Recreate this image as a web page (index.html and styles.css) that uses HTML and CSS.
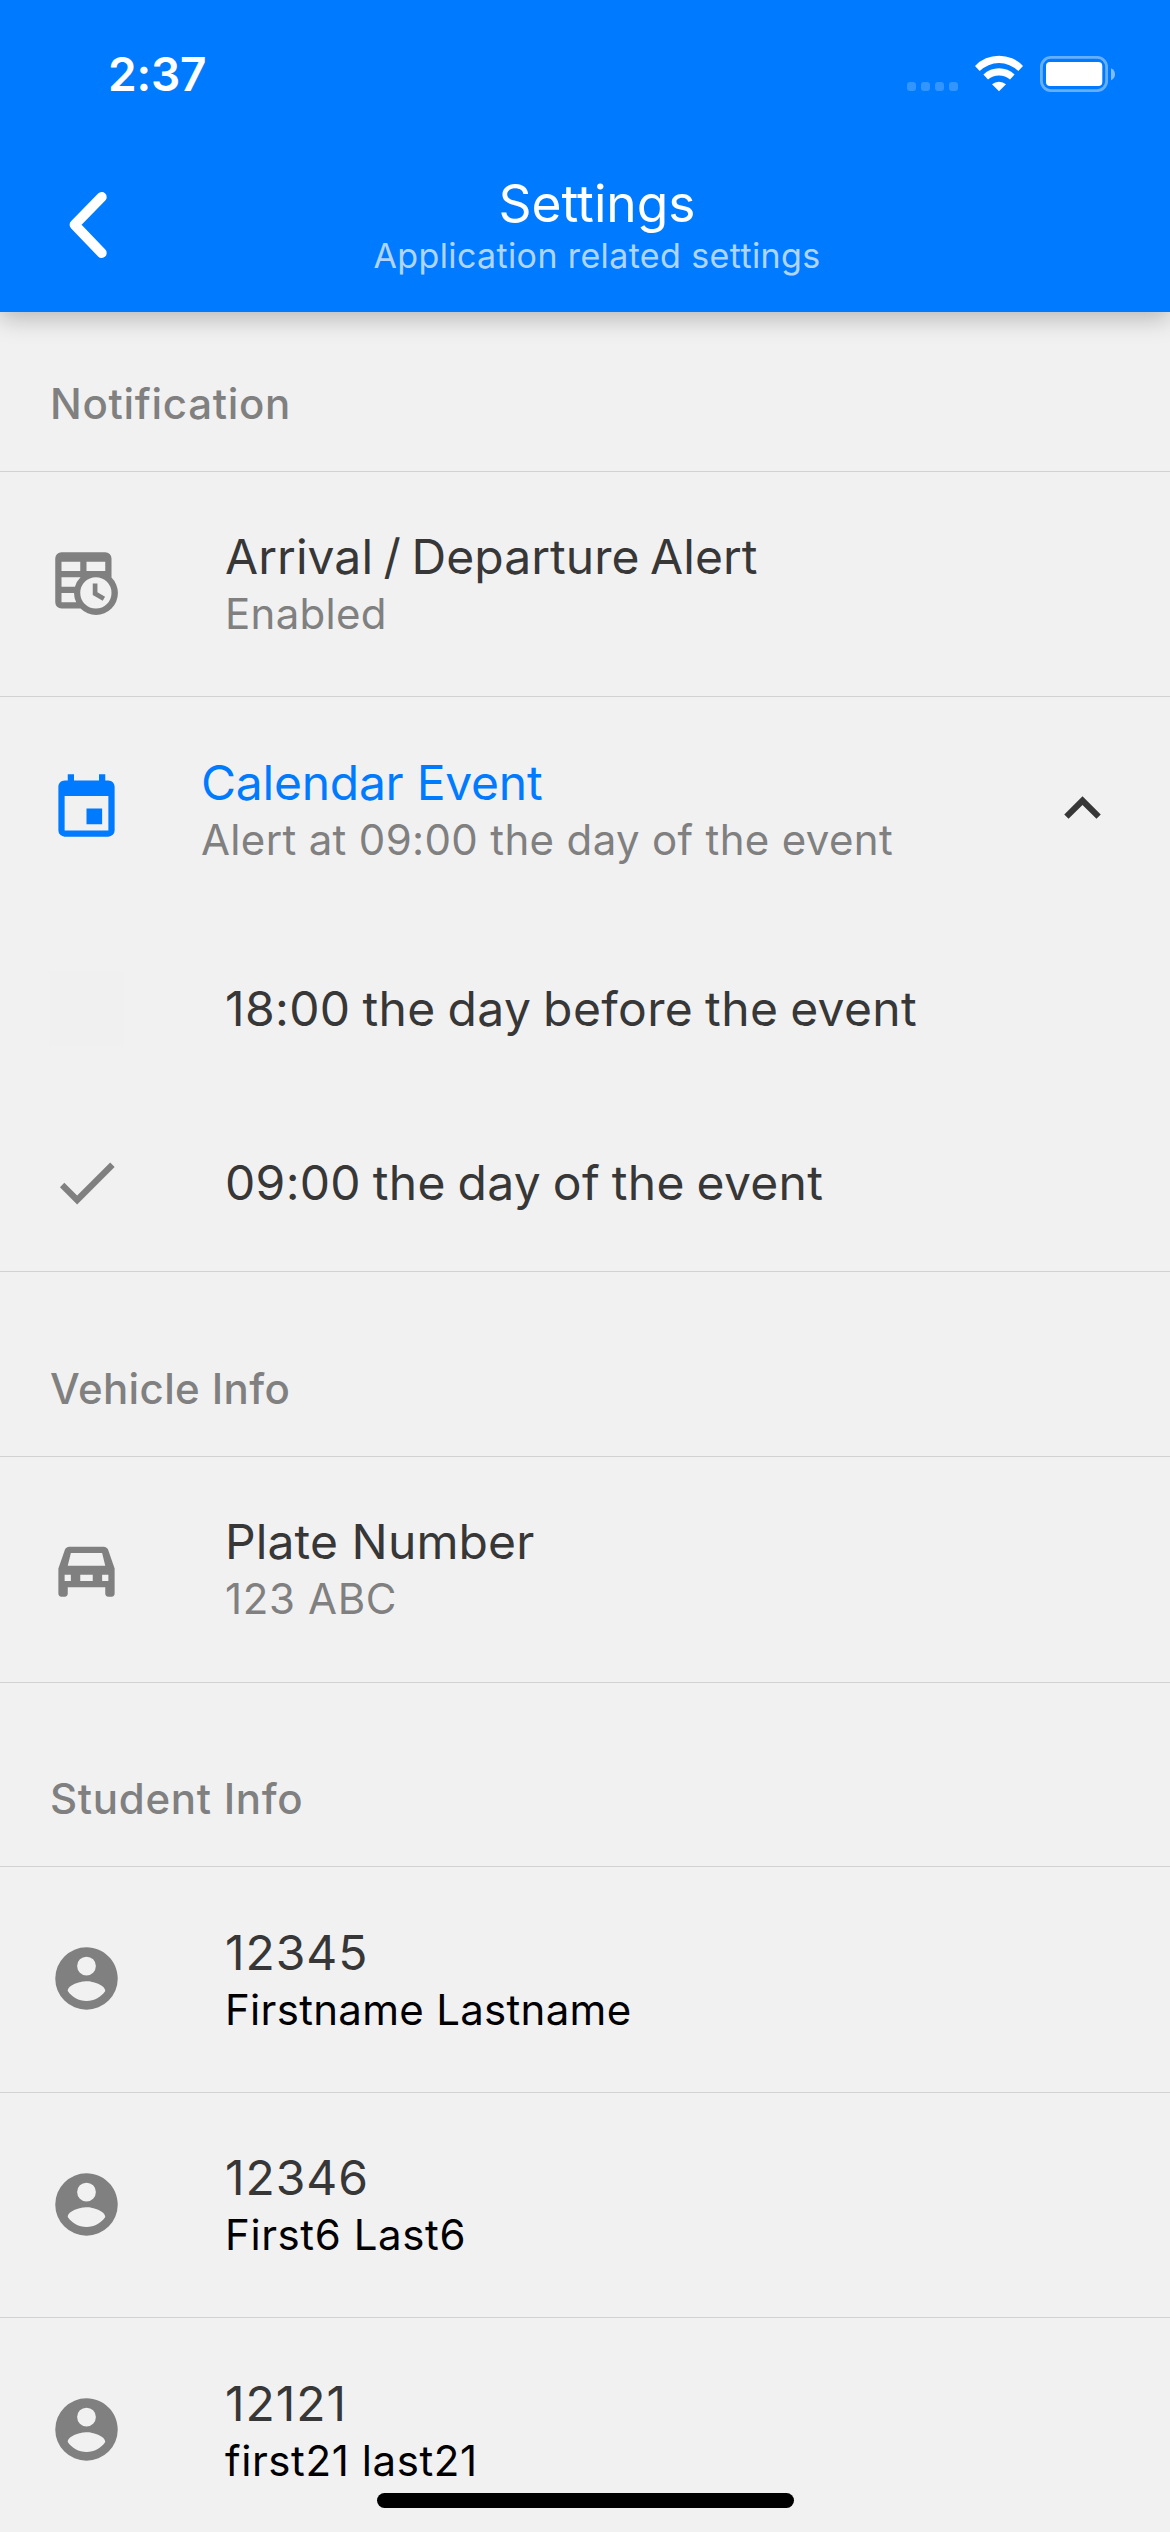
FILE: index.html
```html
<!DOCTYPE html>
<html lang="en">
<head>
<meta charset="utf-8">
<title>Settings</title>
<link rel="stylesheet" href="styles.css">
</head>
<body>
<svg class="sprite" aria-hidden="true">
  <symbol id="account" viewBox="0 0 24 24"><path d="M12,19.2C9.5,19.2 7.29,17.92 6,16C6.03,14 10,12.9 12,12.9C14,12.9 17.97,14 18,16C16.71,17.92 14.5,19.2 12,19.2M12,5A3,3 0 0,1 15,8A3,3 0 0,1 12,11A3,3 0 0,1 9,8A3,3 0 0,1 12,5M12,2A10,10 0 0,0 2,12A10,10 0 0,0 12,22A10,10 0 0,0 22,12C22,6.47 17.5,2 12,2Z"/></symbol>
</svg>
<div class="screen">
  <header class="header">
    <div class="status">
      <span class="time">2:37</span>
      <div class="indicators">
        <div class="signal"><i></i><i></i><i></i><i></i></div>
        <svg class="wifi" viewBox="0 0 48 37">
          <path d="M0 11A33 33 0 0 1 48 11L43.3 16A27.5 27.5 0 0 0 4.7 16Z"/>
          <path d="M8.4 19.4A22.6 22.6 0 0 1 39.6 19.4L35 24.6A16.5 16.5 0 0 0 13 24.6Z"/>
          <path d="M17 29.2A11 11 0 0 1 31 29.2L24 36.2Z"/>
        </svg>
        <svg class="battery" viewBox="0 0 75 36">
          <rect x="1.4" y="1.4" width="65.2" height="33.2" rx="9.5" fill="none" stroke="#fff" stroke-opacity=".4" stroke-width="2.8"/>
          <rect x="6" y="6" width="56.3" height="24" rx="4"/>
          <path fill-opacity=".5" d="M71 12.2C73.4 13.2 75 15.4 75 18.2S73.4 23.2 71 24.2Z"/>
        </svg>
      </div>
    </div>
    <div class="nav">
      <svg class="back" viewBox="0 0 38 66"><path d="M32.7 5L5.6 32.8L32.7 61"/></svg>
      <div class="heading">
        <h1 class="heading-title">Settings</h1>
        <p class="heading-sub">Application related settings</p>
      </div>
    </div>
  </header>

  <main class="list">
    <h2 class="section section-first">Notification</h2>
    <div class="row">
      <svg class="icon" viewBox="0 0 24 24"><path fill-rule="evenodd" d="M4 2H18A2 2 0 0 1 20 4V10.1A7 7 0 1 1 10.1 20H4A2 2 0 0 1 2 18V4A2 2 0 0 1 4 2M4 5V8H10V5H4M12 5V8H18V5H12M4 10V13H8.3A7 7 0 0 1 10.1 10H4M4 15V18H8.7A7 7 0 0 1 8 15H4M15 10A5 5 0 1 0 15 20A5 5 0 1 0 15 10M14 12H15.5V14.82L17.94 16.23L17.19 17.53L14 15.69Z"/></svg>
      <div class="text">
        <div class="title tight">Arrival / Departure Alert</div>
        <div class="sub">Enabled</div>
      </div>
    </div>
    <div class="accordion">
      <div class="row row-open">
        <svg class="icon icon-active" viewBox="0 0 24 24"><path d="M19,19H5V8H19M16,1V3H8V1H6V3H5C3.89,3 3,3.89 3,5V19A2,2 0 0,0 5,21H19A2,2 0 0,0 21,19V5C21,3.89 20.1,3 19,3H18V1M17,12H12V17H17V12Z"/></svg>
        <div class="text">
          <div class="title title-active">Calendar Event</div>
          <div class="sub sub-long">Alert at 09:00 the day of the event</div>
        </div>
        <svg class="chevron" viewBox="0 0 24 24"><path d="M7.41,15.41L12,10.83L16.59,15.41L18,14L12,8L6,14L7.41,15.41Z"/></svg>
      </div>
      <div class="option">
        <span class="icon unchecked"></span>
        <div class="title opt-one">18:00 the day before the event</div>
      </div>
      <div class="option">
        <svg class="icon" viewBox="0 0 24 24"><path d="M21,7L9,19L3.5,13.5L4.91,12.09L9,16.17L19.59,5.59L21,7Z"/></svg>
        <div class="title opt-two">09:00 the day of the event</div>
      </div>
    </div>

    <h2 class="section section-vehicle">Vehicle Info</h2>
    <div class="row">
      <svg class="icon" viewBox="0 0 24 24"><path fill-rule="evenodd" d="M18.92 6C18.72 5.42 18.16 5 17.5 5H6.5C5.84 5 5.28 5.42 5.08 6L3 12V20A1 1 0 0 0 4 21H5A1 1 0 0 0 6 20V18H18V20A1 1 0 0 0 19 21H20A1 1 0 0 0 21 20V12L18.92 6M7 7H17L18 11.1H6L7 7M5 14H7V16H5V14M10 14H14V16H10V14M17 14H19V16H17V14Z"/></svg>
      <div class="text">
        <div class="title plate">Plate Number</div>
        <div class="sub plate-value">123 ABC</div>
      </div>
    </div>

    <h2 class="section">Student Info</h2>
    <div class="row">
      <svg class="icon"><use href="#account"/></svg>
      <div class="text">
        <div class="title number">12345</div>
        <div class="sub name">Firstname Lastname</div>
      </div>
    </div>
    <div class="row">
      <svg class="icon"><use href="#account"/></svg>
      <div class="text">
        <div class="title number">12346</div>
        <div class="sub name name-short">First6 Last6</div>
      </div>
    </div>
    <div class="row">
      <svg class="icon"><use href="#account"/></svg>
      <div class="text">
        <div class="title number">12121</div>
        <div class="sub name name-short">first21 last21</div>
      </div>
    </div>
  </main>
  <div class="home-indicator"></div>
</div>
</body>
</html>
```
FILE: styles.css
```css
* {
  box-sizing: border-box;
  margin: 0;
  padding: 0;
}

body {
  background: #f1f1f1;
  font-family: Inter, "Liberation Sans", sans-serif;
  color: #373737;
}

.sprite {
  display: none;
}

.screen {
  position: relative;
  width: 1170px;
  height: 2532px;
  overflow: hidden;
}

/* Header */
.header {
  position: relative;
  z-index: 1;
  height: 312px;
  background: #007bff;
  color: #fff;
  box-shadow: 0 6px 23px rgba(0, 0, 0, .25);
}

.status {
  display: flex;
  justify-content: space-between;
  align-items: flex-start;
  height: 141px;
  padding: 46px 55px 0 108px;
}

.time {
  font-size: 46px;
  line-height: 56px;
  font-weight: 600;
  letter-spacing: -.2px;
}

.indicators {
  display: flex;
  align-items: flex-end;
  gap: 17px;
  margin-top: 9px;
}

.signal {
  display: flex;
  gap: 5px;
  margin-bottom: 1px;
}

.signal i {
  width: 9px;
  height: 9px;
  border-radius: 3px;
  background: rgba(255, 255, 255, .2);
}

.wifi {
  width: 48px;
  height: 37px;
  fill: #fff;
}

.battery {
  width: 75px;
  height: 36px;
  fill: #fff;
}

.nav {
  display: flex;
  align-items: flex-start;
  height: 171px;
  padding: 33px 83px 0 69px;
}

.back {
  width: 38px;
  height: 66px;
  margin-top: 18px;
  fill: none;
  stroke: #fff;
  stroke-width: 10;
  stroke-linecap: round;
  stroke-linejoin: round;
}

.heading {
  flex: 1;
  text-align: center;
}

.heading-title {
  font-size: 51.5px;
  line-height: 59px;
  font-weight: 400;
  letter-spacing: -.05px;
}

.heading-sub {
  margin-top: 1px;
  font-size: 34px;
  line-height: 43px;
  letter-spacing: .38px;
  color: rgba(255, 255, 255, .7);
}

/* List */
.section {
  display: flex;
  align-items: flex-end;
  height: 184.9px;
  padding: 0 50px 40px;
  border-top: 1px solid #d2d2d2;
  font-size: 42px;
  line-height: 54px;
  font-weight: 500;
  letter-spacing: .7px;
  color: #808080;
}

.section-first {
  height: 158.8px;
  border-top: 0;
}

.section-vehicle {
  letter-spacing: .38px;
}

.row {
  display: flex;
  align-items: center;
  height: 225.5px;
  padding: 0 51px 0 49px;
  border-top: 1px solid #d2d2d2;
}

.icon {
  flex: none;
  width: 75px;
  height: 75px;
  margin-right: 101px;
  margin-bottom: 2px;
  fill: #808080;
}

.icon-active {
  margin-right: 77px;
  fill: #007bff;
}

.text {
  flex: 1;
  padding-top: 2px;
}

.title {
  font-size: 48px;
  line-height: 56px;
}

.title-active {
  letter-spacing: -.25px;
  color: #007bff;
}

.tight {
  letter-spacing: .05px;
  word-spacing: -3px;
}

.opt-one {
  letter-spacing: .38px;
  word-spacing: -2px;
}

.opt-two {
  letter-spacing: .3px;
  word-spacing: -2px;
}

.plate {
  letter-spacing: .11px;
}

.number {
  letter-spacing: .95px;
}

.sub {
  margin-top: 2px;
  font-size: 42px;
  line-height: 54px;
  letter-spacing: .3px;
  color: #808080;
}

.sub-long {
  letter-spacing: .34px;
}

.plate-value {
  letter-spacing: .65px;
}

.name {
  color: #000;
}

.name-short {
  letter-spacing: .6px;
}

.chevron {
  width: 73px;
  height: 73px;
  margin-bottom: 2px;
  fill: #373737;
}

.accordion {
  height: 574.9px;
}

.option {
  display: flex;
  align-items: center;
  height: 174.7px;
  padding: 0 49px;
}

.option .title {
  padding-bottom: 1px;
}

.unchecked {
  background: #f0f0f0;
}

.home-indicator {
  position: absolute;
  z-index: 2;
  left: 50%;
  bottom: 24px;
  width: 417px;
  height: 15px;
  margin-left: -208px;
  border-radius: 8px;
  background: #000;
}
```
